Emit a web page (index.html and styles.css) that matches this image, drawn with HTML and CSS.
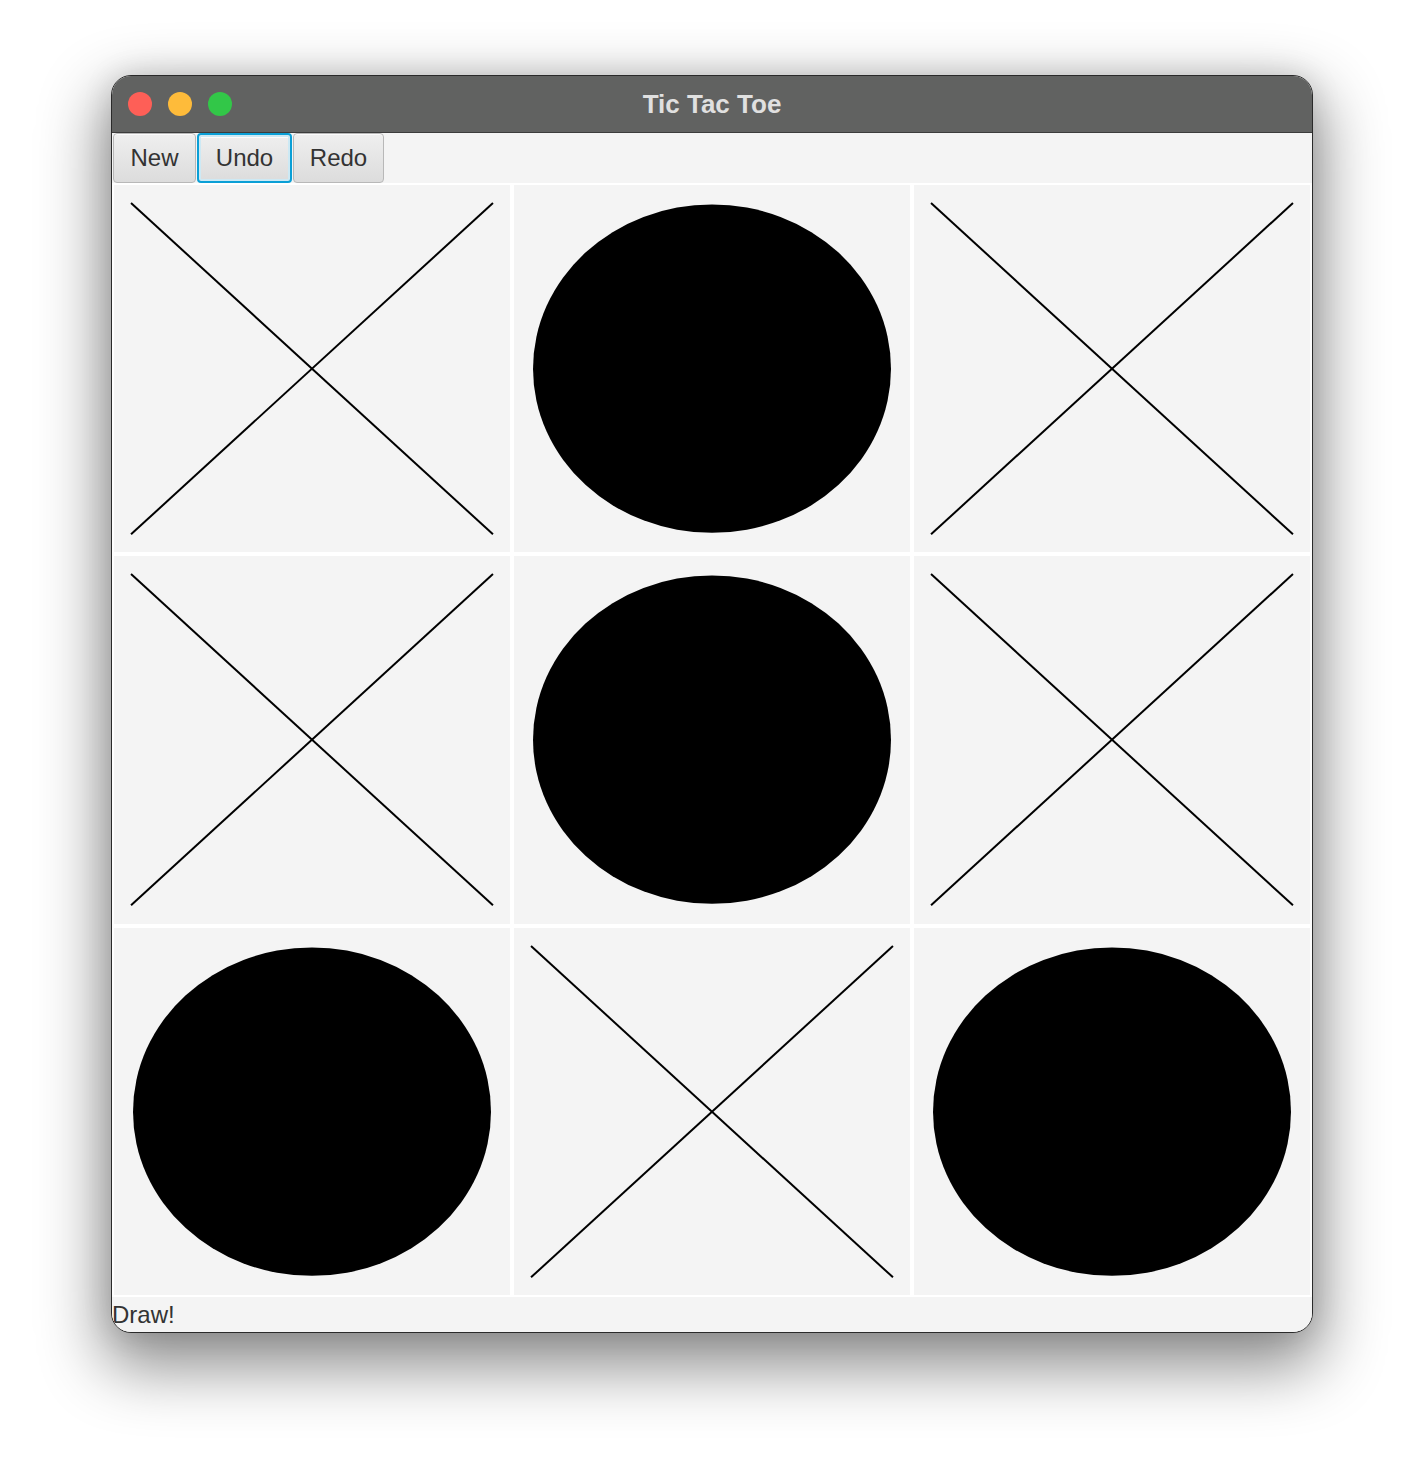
FILE: index.html
```html
<!DOCTYPE html>
<html>
<head>
<meta charset="utf-8">
<title>Tic Tac Toe</title>
<link rel="stylesheet" href="styles.css">
</head>
<body>
<div class="window">
  <div class="titlebar">
    <div class="lights">
      <span class="light red"></span>
      <span class="light yellow"></span>
      <span class="light green"></span>
    </div>
    <div class="title">Tic Tac Toe</div>
  </div>
  <div class="toolbar">
    <button class="btn btn-new">New</button>
    <button class="btn btn-undo focused">Undo</button>
    <button class="btn btn-redo">Redo</button>
  </div>
  <div class="board">
    <div class="cell"><svg class="mark"><line x1="4.3%" y1="4.9%" x2="95.7%" y2="95.1%"/><line x1="4.3%" y1="95.1%" x2="95.7%" y2="4.9%"/></svg></div>
    <div class="cell"><svg class="mark"><ellipse cx="50%" cy="50%" rx="45.2%" ry="44.7%"/></svg></div>
    <div class="cell"><svg class="mark"><line x1="4.3%" y1="4.9%" x2="95.7%" y2="95.1%"/><line x1="4.3%" y1="95.1%" x2="95.7%" y2="4.9%"/></svg></div>
    <div class="cell"><svg class="mark"><line x1="4.3%" y1="4.9%" x2="95.7%" y2="95.1%"/><line x1="4.3%" y1="95.1%" x2="95.7%" y2="4.9%"/></svg></div>
    <div class="cell"><svg class="mark"><ellipse cx="50%" cy="50%" rx="45.2%" ry="44.7%"/></svg></div>
    <div class="cell"><svg class="mark"><line x1="4.3%" y1="4.9%" x2="95.7%" y2="95.1%"/><line x1="4.3%" y1="95.1%" x2="95.7%" y2="4.9%"/></svg></div>
    <div class="cell"><svg class="mark"><ellipse cx="50%" cy="50%" rx="45.2%" ry="44.7%"/></svg></div>
    <div class="cell"><svg class="mark"><line x1="4.3%" y1="4.9%" x2="95.7%" y2="95.1%"/><line x1="4.3%" y1="95.1%" x2="95.7%" y2="4.9%"/></svg></div>
    <div class="cell"><svg class="mark"><ellipse cx="50%" cy="50%" rx="45.2%" ry="44.7%"/></svg></div>
  </div>
  <div class="status">Draw!</div>
</div>
</body>
</html>
```
FILE: styles.css
```css
html, body {
  margin: 0;
  padding: 0;
  background: #ffffff;
}

body {
  font-family: "Liberation Sans", Arial, sans-serif;
  padding-top: 75px;
  padding-left: 111px;
  height: 1480px;
  box-sizing: border-box;
}

.window {
  width: 1200px;
  border: 1px solid #2a2a2a;
  border-radius: 20px;
  overflow: hidden;
  background: #f4f4f4;
  box-shadow: 0 26px 64px 8px rgba(0, 0, 0, 0.45), 0 0 30px rgba(0, 0, 0, 0.12);
}

.titlebar {
  position: relative;
  height: 56px;
  background: #616261;
  border-bottom: 1px solid #3c3c3c;
  display: flex;
  align-items: center;
  justify-content: center;
}

.lights {
  position: absolute;
  left: 16px;
  top: 16px;
  display: flex;
  gap: 16px;
}

.light {
  width: 24px;
  height: 24px;
  border-radius: 50%;
  display: block;
}

.red { background: #fe5f57; }
.yellow { background: #febb3a; }
.green { background: #32c748; }

.title {
  font-size: 26px;
  font-weight: bold;
  color: #e0e0e0;
  line-height: 54px;
}

.toolbar {
  height: 50px;
  display: flex;
  gap: 1px;
  padding-left: 1px;
  background: #f4f4f4;
}

.btn {
  height: 50px;
  box-sizing: border-box;
  border: 1px solid #b8b8b8;
  border-radius: 4px;
  background: linear-gradient(#efefef, #dcdcdc);
  box-shadow: inset 0 1px 0 #fbfbfb;
  font-family: "Liberation Sans", Arial, sans-serif;
  font-size: 24px;
  color: #333333;
  line-height: 48px;
  padding: 0;
  text-align: center;
}

.btn-new { width: 83px; }
.btn-undo { width: 95px; }
.btn-redo { width: 91px; }

.btn.focused {
  border: 2px solid #0a9fd6;
  box-shadow: inset 0 0 0 2px #cde9f4, inset 0 3px 0 #fbfbfb;
  line-height: 46px;
}

.board {
  height: 1114px;
  box-sizing: border-box;
  padding: 2px;
  background: #ffffff;
  display: grid;
  grid-template-columns: repeat(3, 1fr);
  grid-template-rows: repeat(3, 1fr);
  gap: 4px;
}

.cell {
  background: #f4f4f4;
  min-height: 0;
}

.mark {
  display: block;
  width: 100%;
  height: 100%;
}

.mark line {
  stroke: #000000;
  stroke-width: 2;
}

.mark ellipse {
  fill: #000000;
}

.status {
  height: 35px;
  line-height: 35px;
  font-size: 24px;
  color: #333333;
  background: #f4f4f4;
}
```
